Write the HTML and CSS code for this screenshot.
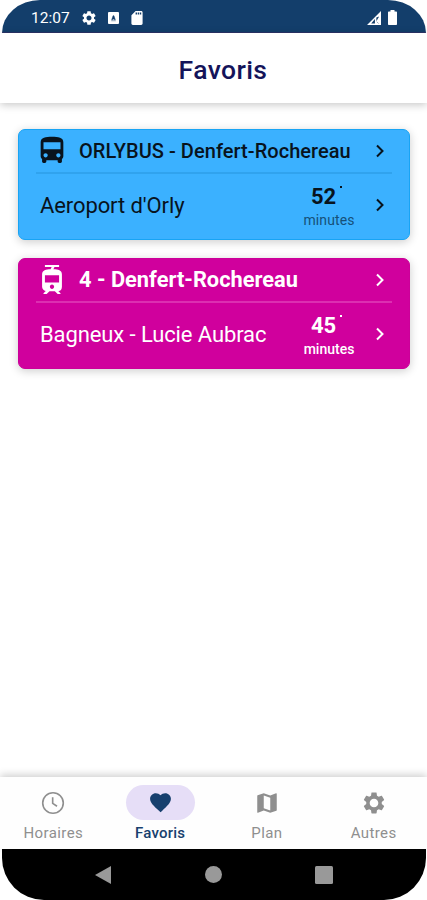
FILE: index.html
```html
<!DOCTYPE html>
<html lang="fr">
<head>
    <meta charset="UTF-8">
    <meta name="viewport" content="width=device-width, initial-scale=1.0">
    <title>Favoris</title>
    <link rel="stylesheet" href="styles.css">
</head>
<body>

<div class="phone">
    <div class="status-bar">
        <span class="time">12:07</span>
        <svg class="status-gear" viewBox="2 2 20 20"><path d="M19.14 12.94c.04-.3.06-.61.06-.94 0-.32-.02-.64-.07-.94l2.03-1.58c.18-.14.23-.41.12-.61l-1.92-3.32c-.12-.22-.37-.29-.59-.22l-2.39.96c-.5-.38-1.03-.7-1.62-.94l-.36-2.54c-.04-.24-.24-.41-.48-.41h-3.84c-.24 0-.43.17-.47.41l-.36 2.54c-.59.24-1.13.57-1.62.94l-2.39-.96c-.22-.08-.47 0-.59.22L2.74 8.87c-.12.21-.08.47.12.61l2.03 1.58c-.05.3-.09.63-.09.94s.02.64.07.94l-2.03 1.58c-.18.14-.23.41-.12.61l1.92 3.32c.12.22.37.29.59.22l2.39-.96c.5.38 1.03.7 1.62.94l.36 2.54c.05.24.24.41.48.41h3.84c.24 0 .44-.17.47-.41l.36-2.54c.59-.24 1.13-.56 1.62-.94l2.39.96c.22.08.47 0 .59-.22l1.92-3.32c.12-.22.07-.47-.12-.61l-2.01-1.58zM12 15.6c-1.98 0-3.6-1.62-3.6-3.6s1.62-3.6 3.6-3.6 3.6 1.62 3.6 3.6-1.62 3.6-3.6 3.6z"/></svg>
        <svg class="status-square" viewBox="0 0 12 13"><rect width="12" height="13" rx="1"/><path class="cut" d="M4 8.500L5.500 4h1L8 8.500H7L6.700 7.700H5.300L5 8.500zM3.500 9.500h5"/></svg>
        <svg class="status-card" viewBox="4 2 16 20"><path d="M18 2h-8L4.020 8 4 20c0 1.100.9 2 2 2h12c1.100 0 2-.9 2-2V4c0-1.100-.9-2-2-2zm-6 5h-2V4h2v3zm3 0h-2V4h2v3zm3 0h-2V4h2v3z"/></svg>
        <svg class="status-signal" viewBox="0 0 15 15"><path d="M0 15L15 0v15zM4.500 13.300H8.500V8.500zM10 7v4l3-5z" fill-rule="evenodd"/><path class="cut" d="M10.500 11.500l2 2"/></svg>
        <svg class="status-battery" viewBox="0 0 9 15"><path d="M2.500 0h4v1.500H8c.6 0 1 .4 1 1V14c0 .6-.4 1-1 1H1c-.6 0-1-.4-1-1V2.500c0-.6.4-1 1-1h1.500z"/></svg>
    </div>

    <header class="header">
        <h1>Favoris</h1>
    </header>

    <main class="content">
        <section class="card bus">
            <div class="card-line">
                <svg class="vehicle" viewBox="0 0 24 24" preserveAspectRatio="none"><path d="M4 16c0 .88.39 1.67 1 2.22V20c0 .55.45 1 1 1h1c.55 0 1-.45 1-1v-1h8v1c0 .55.45 1 1 1h1c.55 0 1-.45 1-1v-1.78c.61-.55 1-1.34 1-2.22V6c0-3.5-3.58-4-8-4s-8 .5-8 4v10zm3.5 1c-.83 0-1.5-.67-1.5-1.5S6.67 14 7.5 14s1.5.67 1.5 1.5S8.33 17 7.5 17zm9 0c-.83 0-1.5-.67-1.5-1.5s.67-1.5 1.5-1.5 1.5.67 1.5 1.5-.67 1.5-1.5 1.5zm1.5-6H6V6h12v5z"/></svg>
                <span class="line-name">ORLYBUS - Denfert-Rochereau</span>
                <svg class="chevron" viewBox="0 0 8 14"><path d="M1 1.500l5.500 5.500L1 12.500"/></svg>
            </div>
            <div class="card-stop">
                <span class="stop-name">Aeroport d'Orly</span>
                <div class="wait">
                    <span class="wait-value">52<i class="dot"></i></span>
                    <span class="wait-unit">minutes</span>
                </div>
                <svg class="chevron" viewBox="0 0 8 14"><path d="M1 1.500l5.500 5.500L1 12.500"/></svg>
            </div>
        </section>

        <section class="card metro">
            <div class="card-line">
                <svg class="vehicle" viewBox="0 0 24 24" preserveAspectRatio="none"><path d="M19 16.94V8.5c0-2.79-2.61-3.4-6.01-3.49l.76-1.51H17V2H7v1.5h4.75l-.76 1.52C7.86 5.11 5 5.73 5 8.5v8.44c0 1.45 1.19 2.66 2.59 2.97L6 21.5v.5h2.23l2-2H14l2 2h2v-.5L16.5 20h-.08c1.69 0 2.58-1.37 2.58-3.06zm-7 1.56c-.83 0-1.5-.67-1.5-1.5s.67-1.5 1.5-1.5 1.5.67 1.5 1.5-.67 1.5-1.5 1.5zm5-4.5H7V9h10v5z"/></svg>
                <span class="line-name">4 - Denfert-Rochereau</span>
                <svg class="chevron" viewBox="0 0 8 14"><path d="M1 1.500l5.500 5.500L1 12.500"/></svg>
            </div>
            <div class="card-stop">
                <span class="stop-name">Bagneux - Lucie Aubrac</span>
                <div class="wait">
                    <span class="wait-value">45<i class="dot"></i></span>
                    <span class="wait-unit">minutes</span>
                </div>
                <svg class="chevron" viewBox="0 0 8 14"><path d="M1 1.500l5.500 5.500L1 12.500"/></svg>
            </div>
        </section>
    </main>

    <nav class="tabs">
        <a class="tab">
            <span class="tab-icon"><svg class="clock" viewBox="0 0 24 24"><circle cx="12" cy="12" r="9.500"/><path d="M11.700 6.800v5.600l4 2.600"/></svg></span>
            <span class="tab-label">Horaires</span>
        </a>
        <a class="tab active">
            <span class="tab-icon"><svg class="heart" viewBox="0 0 24 24"><path d="M12 21.350l-1.450-1.320C5.400 15.360 2 12.280 2 8.500 2 5.420 4.420 3 7.500 3c1.740 0 3.410.81 4.500 2.090C13.090 3.810 14.760 3 16.500 3 19.580 3 22 5.420 22 8.500c0 3.780-3.400 6.860-8.550 11.540L12 21.350z"/></svg></span>
            <span class="tab-label">Favoris</span>
        </a>
        <a class="tab">
            <span class="tab-icon"><svg viewBox="0 0 24 24"><path d="M20.500 3l-.16.03L15 5.100 9 3 3.360 4.900c-.21.07-.36.25-.36.48V20.500c0 .28.22.5.5.5l.16-.03L9 18.900l6 2.100 5.640-1.900c.21-.07.36-.25.36-.48V3.500c0-.28-.22-.5-.5-.5zM15 19l-6-2.110V5l6 2.110V19z"/></svg></span>
            <span class="tab-label">Plan</span>
        </a>
        <a class="tab">
            <span class="tab-icon"><svg viewBox="0 0 24 24"><path d="M19.140 12.940c.04-.3.06-.61.06-.94 0-.32-.02-.64-.07-.94l2.030-1.580c.18-.14.23-.41.12-.61l-1.920-3.320c-.12-.22-.37-.29-.59-.22l-2.390.96c-.5-.38-1.030-.7-1.620-.94l-.36-2.540c-.04-.24-.24-.41-.48-.41h-3.840c-.24 0-.43.17-.47.41l-.36 2.540c-.59.24-1.130.57-1.620.94l-2.390-.96c-.22-.08-.47 0-.59.22L2.740 8.870c-.12.21-.08.47.12.61l2.030 1.580c-.05.3-.09.63-.09.94s.02.64.07.94l-2.030 1.580c-.18.14-.23.41-.12.61l1.920 3.320c.12.22.37.29.59.22l2.390-.96c.5.38 1.030.7 1.620.94l.36 2.540c.05.24.24.41.48.41h3.840c.24 0 .44-.17.47-.41l.36-2.540c.59-.24 1.130-.56 1.620-.94l2.390.96c.22.08.47 0 .59-.22l1.920-3.320c.12-.22.07-.47-.12-.61l-2.010-1.580zM12 16c-2.200 0-4-1.800-4-4s1.800-4 4-4 4 1.800 4 4-1.800 4-4 4z"/></svg></span>
            <span class="tab-label">Autres</span>
        </a>
    </nav>

    <div class="system-bar">
        <svg class="sys-back" viewBox="0 0 16 18"><path d="M0 9L16 0v18z"/></svg>
        <svg class="sys-home" viewBox="0 0 16 16"><circle cx="8" cy="8" r="8"/></svg>
        <svg class="sys-recent" viewBox="0 0 18 18"><rect width="18" height="18" rx="1.500"/></svg>
    </div>
</div>

</body>
</html>
```
FILE: styles.css
```css
* {
    box-sizing: border-box;
}

body {
    margin: 0;
    background-color: #fff;
    font-family: Roboto, sans-serif;
}

svg {
    display: block;
    flex: none;
    fill: currentColor;
}

.phone {
    display: flex;
    flex-direction: column;
    height: 900px;
    overflow: hidden;
}

/* status bar */
.status-bar {
    display: flex;
    align-items: center;
    height: 33px;
    margin: 0 1px 0 2px;
    padding: 3px 29px 0 29px;
    border-bottom: 1px solid #2c3468;
    border-radius: 38px 38px 0 0 / 33px 33px 0 0;
    background-color: #133e6b;
    color: #fff;
}

.time {
    width: 51px;
    font-size: 15.5px;
}

.status-gear {
    width: 14px;
    height: 14px;
}

.status-square {
    width: 11px;
    height: 12px;
    margin-left: 12px;
}

.status-card {
    width: 12px;
    height: 14px;
    margin-left: 12px;
}

.cut {
    fill: #133e6b;
    stroke: #133e6b;
    stroke-width: 0.5;
}

.status-signal {
    width: 14px;
    height: 14px;
    margin-left: auto;
}

.status-battery {
    width: 9px;
    height: 15px;
    margin-left: 7px;
}

/* title */
.header {
    display: flex;
    align-items: center;
    justify-content: center;
    height: 70px;
    padding-left: 19px;
    box-shadow: 0 2px 8px rgba(0, 0, 0, 0.22);
}

h1 {
    margin: 2px 0 0;
    color: #14145a;
    font-size: 26.5px;
    font-weight: 500;
    letter-spacing: 0.4px;
}

/* favourites */
.content {
    display: flex;
    flex: 1;
    flex-direction: column;
    gap: 18px;
    padding: 26px 17px 0 18px;
}

.card {
    height: 111px;
    padding: 0 17px;
    border: 1px solid;
    border-radius: 7px;
    box-shadow: 0 2px 10px rgba(0, 0, 0, 0.2);
}

.bus {
    border-color: #18a4f4;
    background-color: #3bb1ff;
    color: #08131d;
}

.metro {
    border-color: #cc0099;
    background-color: #d0009d;
    color: #fff;
}

.card-line {
    display: flex;
    align-items: center;
    height: 44px;
    padding: 0 8px 1px 0;
    border-bottom: 2px solid #30a3ee;
}

.metro .card-line {
    border-color: #dc2fb1;
}

.vehicle {
    width: 34px;
    height: 33px;
    margin: 0 10px 0 -1px;
}

.metro .vehicle {
    height: 35px;
}

.line-name {
    flex: 1;
    font-size: 20px;
    font-weight: 500;
    letter-spacing: 0.04px;
    white-space: nowrap;
}

.metro .line-name {
    font-size: 21.8px;
    font-weight: 700;
    letter-spacing: 0;
}

.chevron {
    width: 8px;
    height: 14px;
    fill: none;
    stroke: currentColor;
    stroke-width: 2;
}

.card-stop {
    display: flex;
    align-items: center;
    height: 62px;
    padding: 0 8px 0 4px;
}

.stop-name {
    flex: 1;
    font-size: 22px;
    letter-spacing: -0.1px;
    white-space: nowrap;
}

.wait {
    display: flex;
    flex-direction: column;
    align-items: center;
    width: 54px;
    padding-top: 6px;
    margin-right: 20px;
}

.wait-value {
    display: flex;
    padding-right: 5px;
    font-size: 22px;
    font-weight: 700;
    line-height: 24px;
}

.dot {
    width: 2px;
    height: 2px;
    margin: 1px 0 0 4px;
    background-color: currentColor;
}

.wait-unit {
    font-size: 14px;
    line-height: 23px;
    letter-spacing: 0.1px;
}

.bus .wait-unit {
    color: #165078;
}

.metro .wait-unit {
    font-weight: 500;
    letter-spacing: 0;
}

/* bottom tabs */
.tabs {
    display: flex;
    height: 72px;
    padding-top: 8px;
    background-color: #fefefe;
    box-shadow: 0 -2px 8px rgba(0, 0, 0, 0.2);
}

.tab {
    display: flex;
    flex: 1;
    flex-direction: column;
    align-items: center;
    color: #8f8f8f;
}

.tab-icon {
    display: flex;
    align-items: center;
    justify-content: center;
    width: 69px;
    height: 35px;
    border-radius: 18px;
}

.tab-icon svg {
    width: 26px;
    height: 26px;
}

.tab-icon .heart {
    width: 27px;
    height: 25px;
}

.tab-icon .clock {
    fill: none;
    stroke: currentColor;
    stroke-width: 1.5;
}

.tab-label {
    margin-top: 5px;
    font-size: 15px;
    line-height: 17px;
    letter-spacing: 0.4px;
}

.active {
    color: #17406e;
}

.active .tab-icon {
    background-color: #e6def7;
}

.active .tab-label {
    font-weight: 500;
    letter-spacing: 0.2px;
}

/* android buttons */
.system-bar {
    display: flex;
    align-items: center;
    justify-content: space-between;
    height: 51px;
    margin: 0 1px 0 2px;
    padding: 0 93px;
    border-radius: 0 0 42px 42px;
    background-color: #000;
    color: #999;
}

.sys-back {
    width: 16px;
    height: 18px;
}

.sys-home {
    width: 17px;
    height: 17px;
}

.sys-recent {
    width: 18px;
    height: 18px;
}
```
